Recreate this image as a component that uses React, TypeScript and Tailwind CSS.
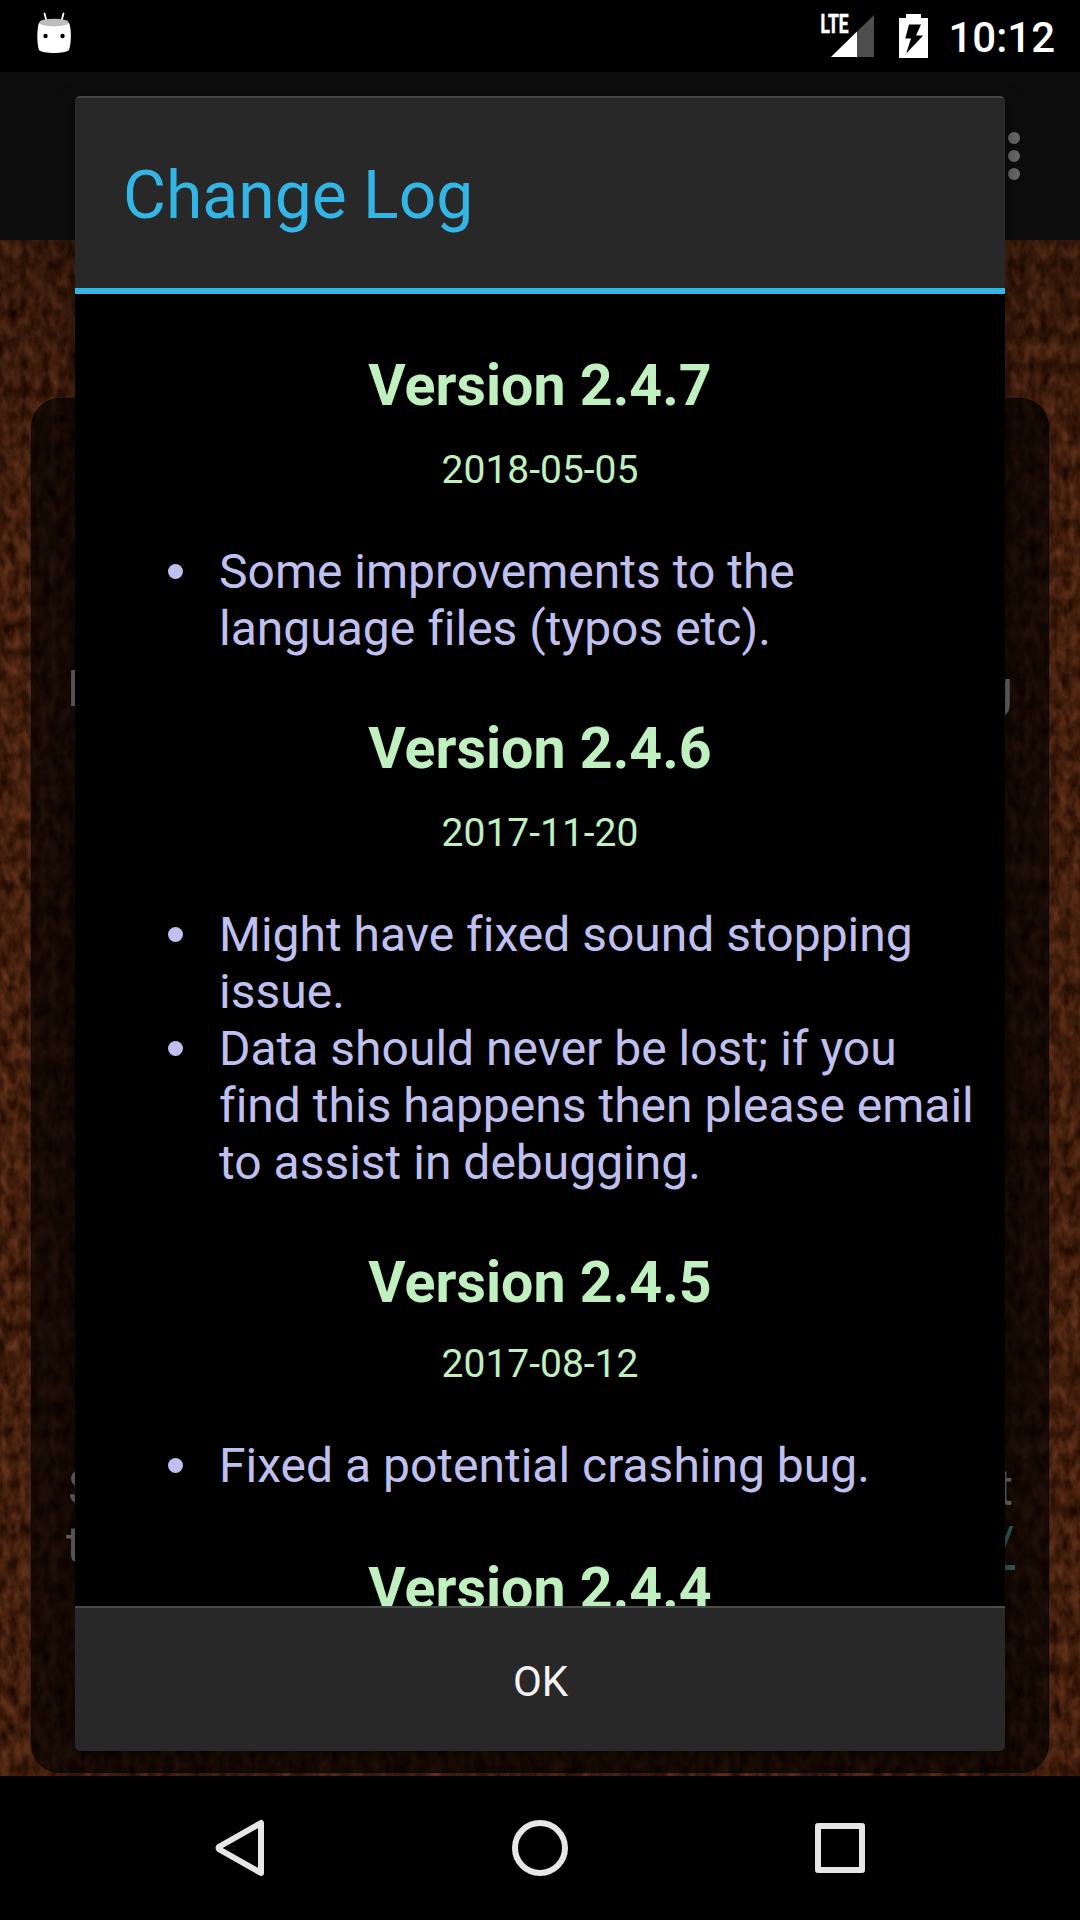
const releases = [
  {
    version: '2.4.7',
    date: '2018-05-05',
    notes: ['Some improvements to the language files (typos etc).'],
    top: 'pt-[58px]',
    gap: 'mt-[28px]',
  },
  {
    version: '2.4.6',
    date: '2017-11-20',
    notes: [
      'Might have fixed sound stopping issue.',
      'Data should never be lost; if you find this happens then please email to assist in debugging.',
    ],
    top: 'pt-[58px]',
    gap: 'mt-[28px]',
  },
  {
    version: '2.4.5',
    date: '2017-08-12',
    notes: ['Fixed a potential crashing bug.'],
    top: 'pt-[58px]',
    gap: 'mt-[25px]',
  },
  { version: '2.4.4', date: '', notes: [], top: 'pt-[61px]', gap: 'mt-[28px]' },
];

function StatusBar() {
  return (
    <header className="flex h-[72px] shrink-0 items-center bg-black pr-[24px] pl-[36px]">
      <svg className="h-[72px] w-[36px]" viewBox="36 0 36 72">
        <path d="M44.500 13.500 46.500 21M63.500 13.500 61.500 21" stroke="#fff" strokeWidth="1.800" strokeLinecap="round" />
        <path d="M39 23c-2 5-2.500 20 0 27 3 4 27 4 30 0 2.500-7 2.500-22 0-27z" fill="#fff" />
        <ellipse cx="54" cy="22.600" rx="14.700" ry="3.900" fill="#bdbdbd" />
        <circle cx="45.500" cy="36" r="2.200" fill="#000" />
        <circle cx="62.500" cy="36" r="2.200" fill="#000" />
      </svg>
      <svg className="ml-auto h-[72px] w-[116px]" viewBox="819 0 116 72">
        <path d="M874 15V57H831z" fill="#4d4d4d" />
        <path d="M857 31.600V57H831z" fill="#fff" />
        <text
          x="820.500"
          y="33.300"
          textLength="28"
          lengthAdjust="spacingAndGlyphs"
          className="fill-white stroke-white stroke-[0.6] font-['Roboto'] text-[25px] font-bold"
        >
          LTE
        </text>
        <path d="M906 14h15v4h7v40h-29V18h7z" fill="#fff" />
        <path d="M909 24.500h12l-5 11h7.200L906.200 53.500l4.800-15h-5.700z" fill="#000" />
      </svg>
      <span className="ml-[13px] pt-[3px] pr-px text-[42px] leading-[72px] font-medium text-white">10:12</span>
    </header>
  );
}

function Wool() {
  return (
    <svg className="absolute inset-0 h-full w-full" aria-hidden="true">
      <defs>
        <filter id="wool" x="0" y="0" width="100%" height="100%" colorInterpolationFilters="sRGB">
          <feTurbulence type="fractalNoise" baseFrequency="0.1 0.05" numOctaves="5" seed="8" />
          <feColorMatrix values="0.36 0 0 0 0.065  0.22 0 0 0 -0.002  0.15 0 0 0 -0.035  0 0 0 0 1" />
        </filter>
        <pattern id="knit" width="24" height="26" patternUnits="userSpaceOnUse">
          <path d="M3 2 9 16M21 2 15 16" stroke="#a0603c" strokeWidth="4" strokeLinecap="round" opacity="0.16" />
          <path d="M12 18v7M0 6v9" stroke="#000" strokeWidth="5" strokeLinecap="round" opacity="0.2" />
        </pattern>
        <filter id="soft" x="0" y="0" width="100%" height="100%">
          <feTurbulence type="fractalNoise" baseFrequency="0.06" numOctaves="2" seed="3" result="n" />
          <feDisplacementMap in="SourceGraphic" in2="n" scale="10" />
          <feGaussianBlur stdDeviation="1.800" />
        </filter>
        <linearGradient id="shade" x2="0" y2="1">
          <stop stopColor="#000" stopOpacity="0.2" />
          <stop offset="0.18" stopColor="#000" stopOpacity="0" />
        </linearGradient>
      </defs>
      <rect width="100%" height="100%" filter="url(#wool)" />
      <rect width="100%" height="100%" fill="url(#knit)" filter="url(#soft)" />
      <rect width="100%" height="100%" fill="url(#shade)" />
    </svg>
  );
}

function Backdrop() {
  return (
    <div className="relative flex h-[1536px] flex-col overflow-hidden px-[31px] pt-[158px] pb-[3px]">
      <Wool />
      <div className="relative flex grow flex-col rounded-[29px] border border-black/60 bg-black/65 text-[50px] leading-[57px] text-[#686868]">
        <div className="mt-[262px] flex h-[57px] justify-between pr-[35px] pl-[35px]">
          <span>H</span>
          <span>g</span>
        </div>
        <div className="mt-[742px] flex justify-between pr-[35px] pl-[36px]">
          <span>S</span>
          <span>t</span>
        </div>
        <div className="flex justify-between pr-[33px] pl-[34px]">
          <span>t</span>
          <span className="text-[#345a56] underline">/</span>
        </div>
      </div>
    </div>
  );
}

function ChangeLog() {
  return (
    <div className="absolute top-[96px] left-[75px] flex h-[1655px] w-[930px] flex-col overflow-hidden rounded-[5px] bg-[#282828] shadow-[0_3px_16px_2px_rgba(0,0,0,0.4)]">
      <h1 className="h-[192px] shrink-0 border-t-2 border-[#454545] pt-[59px] pl-[48px] text-[66px] leading-[77px] text-[#33b5e5]">
        Change Log
      </h1>
      <div className="h-[6px] shrink-0 bg-[#33b5e5]" />
      <div className="h-[1312px] shrink-0 overflow-hidden bg-black px-[24px] [font-variant-ligatures:none]">
        {releases.map((r) => (
          <section key={r.version} className={r.top}>
            <h2 className="text-center text-[57.3px] leading-[68px] font-bold text-[#c0f0c0]">Version {r.version}</h2>
            <p className={`${r.gap} text-center text-[39px] leading-[45px] text-[#c0f0c0]`}>{r.date}</p>
            <ul className="mt-[50px] pl-[120px] text-[48px] leading-[57px] text-[#c0c0f0]">
              {r.notes.map((n) => (
                <li key={n} className="flex">
                  <span className="mt-[21px] mr-[36px] -ml-[51px] size-[15px] shrink-0 rounded-full bg-[#c0c0f0]" />
                  <span>{n}</span>
                </li>
              ))}
            </ul>
          </section>
        ))}
      </div>
      <button className="grow border-t-2 border-[#4a4a4a] pt-[3px] pl-[1px] text-[42px] text-[#f3f3f3]">OK</button>
    </div>
  );
}

export default function App() {
  return (
    <div className="relative flex h-[1920px] w-[1080px] flex-col overflow-hidden bg-black font-['Roboto',sans-serif]">
      <StatusBar />
      <div className="flex h-[168px] shrink-0 items-start justify-end bg-[#0d0d0d] pt-[60px] pr-[60px]">
        <div className="flex flex-col gap-[6px]">
          <i className="size-[12px] rounded-full bg-[#686868]" />
          <i className="size-[12px] rounded-full bg-[#686868]" />
          <i className="size-[12px] rounded-full bg-[#686868]" />
        </div>
      </div>
      <Backdrop />
      <nav className="relative z-10 flex h-[144px] shrink-0 items-center justify-between bg-black pr-[210px] pl-[210px]">
        <svg className="size-[60px]" viewBox="0 0 60 60" fill="none" stroke="#e6e6e6" strokeWidth="6" strokeLinejoin="round">
          <path d="M51 5V55L9.500 31.500Q7.500 30 9.500 28.500z" />
        </svg>
        <svg className="size-[60px]" viewBox="0 0 60 60" fill="none" stroke="#e6e6e6" strokeWidth="6">
          <circle cx="30" cy="30" r="25" />
        </svg>
        <svg className="size-[60px]" viewBox="0 0 60 60" fill="none" stroke="#e6e6e6" strokeWidth="6" strokeLinejoin="round">
          <path d="M8 8h44v44H8z" />
        </svg>
      </nav>
      <ChangeLog />
    </div>
  );
}
